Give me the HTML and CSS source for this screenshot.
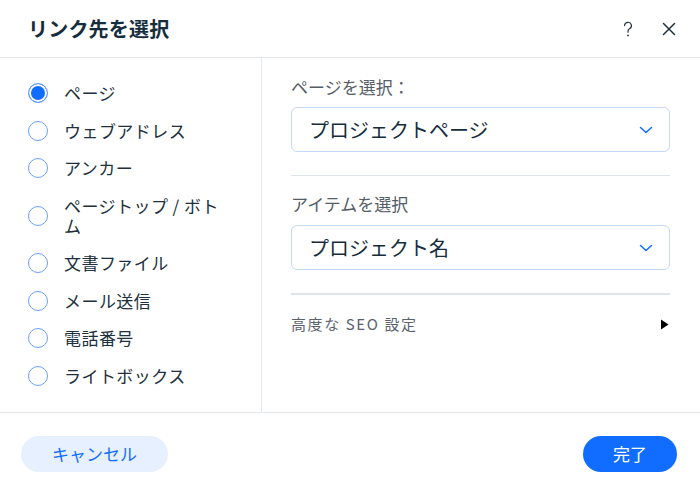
FILE: index.html
```html
<!DOCTYPE html>
<html lang="ja">
<head>
<meta charset="utf-8">
<title>リンク先を選択</title>
<link rel="stylesheet" href="styles.css">
</head>
<body>
<div class="dialog">
  <header class="header">
    <h1 class="title">リンク先を選択</h1>
    <div class="header-actions">
      <button class="icon-btn" aria-label="ヘルプ">
        <svg width="24" height="24" viewBox="0 0 24 24"><path d="M8.6 8.6a3.4 3.4 0 1 1 4.9 3.1c-1 .5-1.5 1.2-1.5 2.3v1.2" fill="none" stroke="#20303c" stroke-width="1.2" stroke-linecap="round"/><circle cx="12" cy="18.4" r="0.9" fill="#20303c"/></svg>
      </button>
      <button class="icon-btn" aria-label="閉じる">
        <svg width="24" height="24" viewBox="0 0 24 24"><path d="M6.5 6.5l11 11M17.5 6.5l-11 11" fill="none" stroke="#20303c" stroke-width="1.5" stroke-linecap="round"/></svg>
      </button>
    </div>
  </header>
  <div class="body">
    <ul class="radio-list">
      <li class="radio-item"><span class="radio checked"></span><span class="radio-label">ページ</span></li>
      <li class="radio-item"><span class="radio"></span><span class="radio-label">ウェブアドレス</span></li>
      <li class="radio-item"><span class="radio"></span><span class="radio-label">アンカー</span></li>
      <li class="radio-item"><span class="radio"></span><span class="radio-label">ページトップ / ボトム</span></li>
      <li class="radio-item"><span class="radio"></span><span class="radio-label">文書ファイル</span></li>
      <li class="radio-item"><span class="radio"></span><span class="radio-label">メール送信</span></li>
      <li class="radio-item"><span class="radio"></span><span class="radio-label">電話番号</span></li>
      <li class="radio-item"><span class="radio"></span><span class="radio-label">ライトボックス</span></li>
    </ul>
    <div class="settings">
      <div class="field-label">ページを選択：</div>
      <div class="dropdown">
        <span>プロジェクトページ</span>
        <svg class="chevron" width="14" height="8" viewBox="0 0 14 8"><polyline points="1.5,1.5 7,6.5 12.5,1.5" fill="none" stroke="#116dff" stroke-width="1.5" stroke-linecap="round" stroke-linejoin="round"/></svg>
      </div>
      <div class="divider"></div>
      <div class="field-label second">アイテムを選択</div>
      <div class="dropdown">
        <span>プロジェクト名</span>
        <svg class="chevron" width="14" height="8" viewBox="0 0 14 8"><polyline points="1.5,1.5 7,6.5 12.5,1.5" fill="none" stroke="#116dff" stroke-width="1.5" stroke-linecap="round" stroke-linejoin="round"/></svg>
      </div>
      <div class="divider thick"></div>
      <div class="seo-row">
        <span class="seo-label">高度な SEO 設定</span>
        <svg width="9" height="11" viewBox="0 0 9 11"><polygon points="1,0.5 8.5,5.5 1,10.5" fill="#000"/></svg>
      </div>
    </div>
  </div>
  <footer class="footer">
    <button class="btn btn-secondary">キャンセル</button>
    <button class="btn btn-primary">完了</button>
  </footer>
</div>
</body>
</html>
```

FILE: styles.css
```css
* { box-sizing: border-box; }
html, body { margin: 0; padding: 0; background: #fff; }
body {
  font-family: "Noto Sans CJK JP", "Noto Sans", sans-serif;
  color: #20303c;
}
.dialog {
  width: 700px;
  height: 492px;
  display: flex;
  flex-direction: column;
  background: #fff;
}
.header {
  height: 58px;
  border-bottom: 1px solid #e3e7ec;
  display: flex;
  align-items: center;
  justify-content: space-between;
  padding: 0 19px 0 28px;
  flex: none;
}
.title {
  margin: 0;
  font-size: 20px;
  font-weight: 700;
  line-height: 24px;
  letter-spacing: 0.2px;
  color: #162d3d;
}
.header-actions {
  display: flex;
  gap: 17px;
  align-items: center;
}
.icon-btn {
  width: 24px;
  height: 24px;
  padding: 0;
  border: 0;
  background: none;
  display: flex;
  align-items: center;
  justify-content: center;
}
.body {
  height: 354px;
  display: flex;
  flex: none;
}
.radio-list {
  list-style: none;
  margin: 0;
  width: 262px;
  flex: none;
  border-right: 1px solid #e6eaef;
  padding: 25px 32px 0 28px;
  display: flex;
  flex-direction: column;
  gap: 17.5px;
}
.radio-item {
  display: flex;
  align-items: center;
  gap: 16px;
}
.radio {
  width: 20px;
  height: 20px;
  flex: none;
  border-radius: 50%;
  border: 1.6px solid #6aa0ff;
  background: #fff;
}
.radio.checked {
  background: #116dff;
  box-shadow: inset 0 0 0 2px #fff;
}
.radio-label {
  font-size: 17px;
  line-height: 20px;
  letter-spacing: 0.45px;
  color: #20303c;
}
.settings {
  flex: 1;
  padding: 18px 30px 0 29px;
  display: flex;
  flex-direction: column;
}
.field-label {
  font-size: 17px;
  line-height: 22px;
  color: #555d66;
  margin-bottom: 9px;
}
.field-label.second {
  margin-bottom: 10px;
}
.dropdown {
  height: 45px;
  flex: none;
  border: 1px solid #c3d8fb;
  border-radius: 6px;
  display: flex;
  align-items: center;
  justify-content: space-between;
  padding: 0 16px 0 17px;
  font-size: 20px;
  color: #162d3d;
}
.chevron { margin-top: 1px; }
.divider {
  height: 1px;
  flex: none;
  background: #dfe4ea;
  margin: 23px 0 17px;
}
.divider.thick {
  height: 2px;
  margin: 23px 0 18px;
}
.seo-row {
  display: flex;
  align-items: center;
  justify-content: space-between;
  padding-right: 1px;
}
.seo-label {
  font-size: 15px;
  line-height: 22px;
  letter-spacing: 1.6px;
  color: #59626c;
}
.footer {
  flex: 1;
  border-top: 1px solid #e3e7ec;
  display: flex;
  justify-content: space-between;
  align-items: flex-start;
  padding: 23px 23px 0 21px;
}
.btn {
  height: 36px;
  border: 0;
  border-radius: 18px;
  font-family: inherit;
  font-size: 17px;
  line-height: 36px;
  padding: 0;
}
.btn-secondary {
  width: 147px;
  background: #e7f0ff;
  color: #116dff;
}
.btn-primary {
  width: 94px;
  background: #116dff;
  color: #fff;
}
```
